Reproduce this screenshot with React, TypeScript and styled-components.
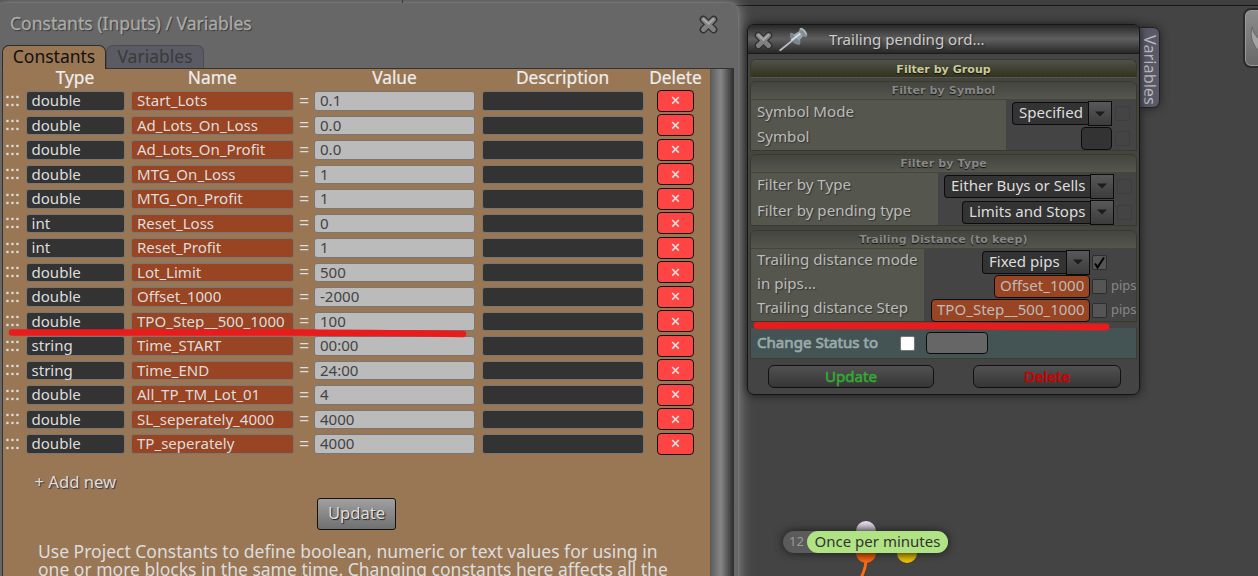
import React from 'react';
import styled, { createGlobalStyle, css } from 'styled-components';

const Global = createGlobalStyle`
  *, *::before, *::after { box-sizing: border-box; }
  body { margin: 0; background: #444; font-family: "Noto Sans", sans-serif; }
`;

const Desktop = styled.div`
  position: relative;
  width: 1258px;
  height: 576px;
  overflow: hidden;
  background: #444;
`;

const TopBar = styled.div`
  height: 6px;
  background: #3f3f3f;
  border-bottom: 1px solid #161616;
`;

/* ---------- constants dialog ---------- */

const Dialog = styled.section`
  position: absolute;
  left: -4px;
  top: 3px;
  width: 742px;
  height: 620px;
  display: flex;
  flex-direction: column;
  padding: 0 4px 0 6px;
  background: #676767;
  border-radius: 9px;
  box-shadow: 0 0 2px #8d8d8d, 0 0 13px 2px #8a8a8a;
`;

const DialogHead = styled.header`
  display: flex;
  justify-content: space-between;
  height: 42px;
  padding: 0 15px 0 8px;
`;

const DialogTitle = styled.h1`
  margin: 0;
  font-size: 17.55px;
  font-weight: 400;
  line-height: 41px;
  color: #aaa;
  -webkit-text-stroke: 0.3px #aaa;
  text-shadow: 1px 1px 1px #333;
`;

const CloseBox = styled.span<{ $top: number }>`
  display: block;
  height: 20px;
  margin-top: ${p => p.$top}px;
`;

const TabStrip = styled.nav`
  display: flex;
  height: 23px;
`;

const Tab = styled.div<{ $active?: boolean; $width: number }>`
  width: ${p => p.$width}px;
  height: 23px;
  border: 1px solid #4c4c50;
  border-bottom: 0;
  border-radius: 7px 7px 0 0;
  background: #5b5b65;
  color: #3a3a3a;
  font-size: 17.5px;
  line-height: 21px;
  text-align: center;
  white-space: nowrap;
  ${p => p.$active && css`
    position: relative;
    height: 24px;
    border-color: #2c2c2c;
    background: #997755;
    color: #111;
  `}
`;

const TabBody = styled.div`
  flex: 1;
  display: flex;
  width: 732px;
  border: 1px solid #333;
  background: #997755;
`;

const TabContent = styled.div`
  width: 707px;
  flex: none;
`;

const Scroll = styled.div`
  flex: 1;
  background: linear-gradient(90deg, #5a5a5a, #858585 45%, #7a7a7a 55%, #303030);
`;

const Columns = styled.div`
  display: grid;
  grid-template-columns: 14px 99px 162.5px 7.5px 161px 162px 44px;
  column-gap: 6.5px;
  padding-left: 2px;
`;

const HeadRow = styled(Columns)`
  height: 19.5px;
  font-size: 17.33px;
  line-height: 17px;
  text-align: center;
  color: #eee;
  white-space: nowrap;
  -webkit-text-stroke: 0.2px #eee;
`;

const DeleteHead = styled.span`
  margin: 0 -9px 0 -2px;
`;

const Row = styled(Columns)`
  align-items: center;
  height: 24.5px;
`;

const fieldColors = {
  dark: ['#333', '#ddd'],
  rust: ['#994422', '#ddd'],
  light: ['#bbb', '#444'],
};

const Field = styled.div<{ $tone: keyof typeof fieldColors }>`
  height: 19.5px;
  padding-left: 5px;
  border: 1px solid #777;
  border-radius: 3px;
  background: ${p => fieldColors[p.$tone][0]};
  color: ${p => fieldColors[p.$tone][1]};
  font-size: 15.05px;
  line-height: 17px;
  white-space: nowrap;
`;

const Equals = styled.span`
  color: #ddd;
  font-size: 18px;
  line-height: 18px;
  margin: -2px 0 0 -1px;
`;

const DeleteButton = styled.button`
  display: grid;
  place-items: center;
  justify-self: end;
  width: 37px;
  height: 22px;
  padding: 0;
  border: 1px solid #111;
  border-radius: 4px;
  background: #ff4444;
`;

const AddNew = styled.div`
  margin: 15.5px 0 0 31.5px;
  color: #ddd;
  font-size: 16.65px;
  line-height: 20px;
  text-shadow: 1px 1px 1px #333;
`;

const UpdateButton = styled.button`
  display: block;
  width: 79px;
  height: 32px;
  margin: 6px 0 0 314px;
  padding: 0 0 2px;
  border: 1px solid #111;
  border-radius: 3px;
  background: linear-gradient(#a0a0a0, #707070);
  color: #ddd;
  font: 16.6px "Noto Sans", sans-serif;
  text-shadow: 1px 1px 1px #222;
`;

const Help = styled.p`
  margin: 12px 0 0 35px;
  color: #ddd;
  font-size: 17.5px;
  line-height: 18px;
  white-space: nowrap;
`;

/* ---------- block settings panel ---------- */

const Panel = styled.section`
  position: absolute;
  left: 747px;
  top: 24px;
  width: 393px;
  height: 371px;
  display: flex;
  flex-direction: column;
  border: 1px solid #161616;
  border-radius: 7px;
  background: #444;
  box-shadow: 0 0 10px #1c1c1c;
`;

const PanelHead = styled.header`
  display: flex;
  height: 29px;
  flex: none;
  padding-left: 6px;
  border-bottom: 1px solid #1b1b1b;
  border-radius: 6px 6px 0 0;
  background: linear-gradient(#282828, #5f5f5f 50%, #282828);
`;

const PanelTitle = styled.h2`
  margin: 0 0 0 19px;
  color: #ccc;
  font-size: 15.1px;
  font-weight: 400;
  line-height: 28px;
  text-shadow: 1px 1px 2px #222;
`;

const PinBox = styled.span`
  display: block;
  width: 31px;
  height: 28px;
  margin-left: 5px;
`;

const SideTab = styled.aside`
  position: absolute;
  left: 1139px;
  top: 27px;
  width: 21px;
  height: 81px;
  display: grid;
  place-items: center;
  padding-top: 4px;
  border: 1px solid #222;
  border-radius: 0 7px 7px 0;
  background: #595969;
  box-shadow: 0 0 8px #222;
  color: #bbb;
  font-size: 16.3px;
  line-height: 19px;
  writing-mode: vertical-rl;
`;

const GroupHead = styled.div`
  flex: none;
  height: 19px;
  margin: 5px 2px 0;
  border: 1px solid #3a3b26;
  border-bottom: 1px dashed #5a5b3a;
  border-radius: 6px 6px 0 0;
  background: linear-gradient(#50514a, #32331f);
  color: #cccc99;
  font: bold 11px/19px "DejaVu Sans", sans-serif;
  letter-spacing: 0.05px;
  text-align: center;
  text-shadow: 0 1px 1px #111;
`;

const Group = styled.section<{ $top: number }>`
  flex: none;
  margin: ${p => p.$top}px 2px 0;
  border: 1px solid #3a3b26;
  border-radius: 6px 6px 0 0;
`;

const GroupTitle = styled.h3`
  height: 18px;
  margin: 0;
  border-bottom: 1px solid #45463a;
  border-radius: 5px 5px 0 0;
  background: linear-gradient(#44453f, #55564e);
  color: #888;
  font: bold 11px/18px "DejaVu Sans", sans-serif;
  letter-spacing: 0.15px;
  text-align: center;
  text-shadow: 0 1px 1px #111;
`;

const GroupBody = styled.div<{ $labels: number }>`
  display: grid;
  grid-template-columns: ${p => p.$labels}px 1fr;
`;

const Labels = styled.div<{ $row: number }>`
  display: grid;
  grid-auto-rows: ${p => p.$row}px;
  align-items: center;
  padding-left: 6px;
  background: #55564e;
  color: #bbb;
  font-size: 15.1px;
  line-height: 20px;
  text-shadow: 1px 1px 1px #333;
  white-space: nowrap;

  span { padding-bottom: 4px; }
`;

const Controls = styled.div<{ $row: number; $drop?: number }>`
  display: grid;
  grid-auto-rows: ${p => p.$row}px;
  align-content: start;
  margin: ${p => p.$drop ?? 0}px 0 -${p => p.$drop ?? 0}px;
`;

const ControlRow = styled.div<{ $end: number }>`
  display: flex;
  align-items: center;
  justify-content: flex-end;
  padding-right: ${p => p.$end}px;
`;

const SelectText = styled.div<{ $width: number }>`
  width: ${p => p.$width}px;
  height: 23px;
  border: 1px solid #0c0c0c;
  border-right: 0;
  border-radius: 4px 0 0 4px;
  background: #333;
  color: #ddd;
  font-size: 15.05px;
  line-height: 19px;
  padding-left: 6px;
  white-space: nowrap;
`;

const SelectArrow = styled.div`
  display: grid;
  place-items: center;
  width: 24px;
  height: 25px;
  border: 1px solid #0c0c0c;
  background: linear-gradient(#585858, #3c3c3c);
`;

const Check = styled.span<{ $faint?: boolean; $gap: number }>`
  display: grid;
  place-items: center;
  width: 15px;
  height: 15px;
  margin-left: ${p => p.$gap}px;
  border: 1px solid ${p => (p.$faint ? '#3d3d3d' : '#2d2d2d')};
  border-radius: 2px;
  background: ${p => (p.$faint ? 'transparent' : '#555')};
`;

const Token = styled.div<{ $width: number; $blank?: boolean }>`
  width: ${p => p.$width}px;
  height: 23px;
  padding-left: 5px;
  border: 1px solid #0c0c0c;
  border-radius: 4px;
  background: ${p => (p.$blank ? '#333' : '#994422')};
  color: #bbb;
  font-size: 15.05px;
  line-height: 18px;
  white-space: nowrap;
`;

const Unit = styled.span`
  width: 25px;
  margin: -2px 0 0 4px;
  color: #888;
  font-size: 13px;
  line-height: 18px;
`;

const Status = styled.div`
  flex: none;
  display: flex;
  align-items: center;
  height: 31px;
  margin: 6px 2px 0;
  padding-left: 6px;
  border: 1px solid #3a4030;
  border-top: 0;
  background: #445454;
`;

const StatusLabel = styled.span`
  width: 143px;
  padding-bottom: 2px;
  color: #99aaaa;
  font-size: 15.1px;
  -webkit-text-stroke: 0.7px #99aaaa;
  line-height: 20px;
`;

const StatusCheck = styled.span`
  width: 15px;
  height: 15px;
  border: 1px solid #777;
  border-radius: 2px;
  background: #fff;
`;

const StatusField = styled.span`
  width: 62px;
  height: 22px;
  margin-left: 11px;
  border: 1px solid #0c0c0c;
  border-radius: 4px;
  background: #666;
`;

const Actions = styled.footer`
  display: flex;
  gap: 39px;
  padding: 6px 0 0 20px;
`;

const Action = styled.button<{ $width: number; $color: string }>`
  width: ${p => p.$width}px;
  height: 23px;
  padding: 0 0 1px;
  border: 1px solid #111;
  border-radius: 6px;
  background: linear-gradient(#515151, #363636);
  color: ${p => p.$color};
  -webkit-text-stroke: 0.6px ${p => p.$color};
  font: 15.1px/19px "Noto Sans", sans-serif;
`;

/* ---------- canvas items ---------- */

const Wires = styled.svg`
  position: absolute;
  left: 840px;
  top: 515px;
`;

const Node = styled.div`
  position: absolute;
  left: 783px;
  top: 531px;
  width: 165px;
  height: 22px;
  display: flex;
  border-radius: 11px;
  background: #5b5b5b;
  box-shadow: 0 0 10px #1a1a1a;
`;

const NodeIndex = styled.span`
  width: 24px;
  padding-left: 6px;
  color: #999;
  font-size: 13px;
  line-height: 21px;
`;

const NodeName = styled.span`
  flex: 1;
  border-radius: 11px;
  background: #b0e383;
  color: #333;
  font-size: 15px;
  line-height: 21px;
  text-align: center;
  white-space: nowrap;
`;

const EdgeButton = styled.div`
  position: absolute;
  left: 1243px;
  top: 8px;
  width: 40px;
  height: 60px;
  border: 2px solid #2b2b2b;
  border-radius: 8px;
  background: linear-gradient(#8c8c8c, #686868);
  box-shadow: inset 0 0 0 1px #999;
`;

const Marker = styled.svg`
  position: absolute;
  left: 0;
  top: 0;
`;

const CrossIcon = () => (
  <svg width="20" height="20" viewBox="0 0 20 20">
    <path d="M4.300 4.300L14.700 14.700M14.700 4.300L4.300 14.700" stroke="#303030" strokeWidth="7.400" strokeLinecap="round" />
    <path d="M4.500 4.500L14.500 14.500M14.500 4.500L4.500 14.500" stroke="#808080" strokeWidth="4.900" strokeLinecap="round" />
    <path d="M4.300 4L9.500 8.800L14.500 4" stroke="#a6a6a6" strokeWidth="2" strokeLinecap="round" fill="none" />
  </svg>
);

const PinIcon = () => (
  <svg width="31" height="28" viewBox="0 0 31 28">
    <path d="M1.200 25.200L14 15" stroke="#b6bcc0" strokeWidth="1.800" strokeLinecap="round" />
    <path d="M11 8Q13.500 7 15.500 9.500L20.500 14Q22.500 17 20.500 20Q15.500 19.500 12.500 16Q10 12 11 8Z" fill="#7c868d" />
    <path d="M14 10L21 5.500L25.500 9.500L20 16Z" fill="#98a2a9" />
    <path d="M13 15L22 8" stroke="#d5dadd" strokeWidth="2.200" strokeLinecap="round" />
    <ellipse cx="24.300" cy="7.500" rx="3" ry="5.400" transform="rotate(-38 24.300 7.500)" fill="#858f96" />
    <path d="M21 4Q24.500 3.500 27.500 9.500" stroke="#bcc3c7" strokeWidth="1.200" fill="none" />
  </svg>
);

const Cross = () => (
  <svg width="9" height="9" viewBox="0 0 9 9">
    <path d="M1.200 1L7.800 7.600M7.800 1L1.200 7.600" stroke="#ddd" strokeWidth="1.700" />
  </svg>
);

const Grip = () => (
  <svg width="14" height="12" viewBox="0 0 14 12">
    {[1.3, 6.3, 11.3].map(x => [0.8, 8.8].map(y => (
      <rect key={`${x}-${y}`} x={x} y={y} width="2.300" height="2.300" fill="#ddd" />
    )))}
  </svg>
);

const Select = ({ text, width }: { text: string; width: number }) => (
  <>
    <SelectText $width={width}>{text}</SelectText>
    <SelectArrow>
      <svg width="10" height="6" viewBox="0 0 10 6"><path d="M0 0.500H10L5 5.500Z" fill="#1c1c1c" /></svg>
    </SelectArrow>
  </>
);

const rows: [string, string, string][] = [
  ['double', 'Start_Lots', '0.1'],
  ['double', 'Ad_Lots_On_Loss', '0.0'],
  ['double', 'Ad_Lots_On_Profit', '0.0'],
  ['double', 'MTG_On_Loss', '1'],
  ['double', 'MTG_On_Profit', '1'],
  ['int', 'Reset_Loss', '0'],
  ['int', 'Reset_Profit', '1'],
  ['double', 'Lot_Limit', '500'],
  ['double', 'Offset_1000', '-2000'],
  ['double', 'TPO_Step__500_1000', '100'],
  ['string', 'Time_START', '00:00'],
  ['string', 'Time_END', '24:00'],
  ['double', 'All_TP_TM_Lot_01', '4'],
  ['double', 'SL_seperately_4000', '4000'],
  ['double', 'TP_seperately', '4000'],
];

export default function App() {
  return (
    <>
      <Global />
      <Desktop>
        <TopBar />
        <EdgeButton>
          <svg width="20" height="54" viewBox="0 0 20 54">
            <path d="M7 17Q3 32 16 43L24 43V36Q10 30 7 17Z" fill="#a2a2a2" stroke="#666" />
          </svg>
        </EdgeButton>

        <Dialog>
          <DialogHead>
            <DialogTitle>Constants (Inputs) / Variables</DialogTitle>
            <CloseBox $top={12}><CrossIcon /></CloseBox>
          </DialogHead>
          <TabStrip>
            <Tab $active $width={104}>Constants</Tab>
            <Tab $width={98}>Variables</Tab>
          </TabStrip>
          <TabBody>
            <TabContent>
              <HeadRow>
                <span /><span>Type</span><span>Name</span><span /><span>Value</span><span>Description</span>
                <DeleteHead>Delete</DeleteHead>
              </HeadRow>
              {rows.map(([type, name, value]) => (
                <Row key={name}>
                  <Grip />
                  <Field $tone="dark">{type}</Field>
                  <Field $tone="rust">{name}</Field>
                  <Equals>=</Equals>
                  <Field $tone="light">{value}</Field>
                  <Field $tone="dark" />
                  <DeleteButton><Cross /></DeleteButton>
                </Row>
              ))}
              <AddNew>+ Add new</AddNew>
              <UpdateButton>Update</UpdateButton>
              <Help>
                Use Project Constants to define boolean, numeric or text values for using in<br />
                one or more blocks in the same time. Changing constants here affects all the
              </Help>
            </TabContent>
            <Scroll />
          </TabBody>
        </Dialog>

        <SideTab>Variables</SideTab>
        <Panel>
          <PanelHead>
            <CloseBox $top={6}><CrossIcon /></CloseBox>
            <PinBox><PinIcon /></PinBox>
            <PanelTitle>Trailing pending ord...</PanelTitle>
          </PanelHead>
          <GroupHead>Filter by Group</GroupHead>
          <Group $top={3}>
            <GroupTitle>Filter by Symbol</GroupTitle>
            <GroupBody $labels={255}>
              <Labels $row={25}><span>Symbol Mode</span><span>Symbol</span></Labels>
              <Controls $row={25} $drop={1}>
                <ControlRow $end={6}><Select text="Specified" width={76} /><Check $faint $gap={3} /></ControlRow>
                <ControlRow $end={6}><Token $blank $width={31} /><Check $faint $gap={3} /></ControlRow>
              </Controls>
            </GroupBody>
          </Group>
          <Group $top={3}>
            <GroupTitle>Filter by Type</GroupTitle>
            <GroupBody $labels={187}>
              <Labels $row={26}><span>Filter by Type</span><span>Filter by pending type</span></Labels>
              <Controls $row={26}>
                <ControlRow $end={4}><Select text="Either Buys or Sells" width={146} /><Check $faint $gap={3} /></ControlRow>
                <ControlRow $end={4}><Select text="Limits and Stops" width={128} /><Check $faint $gap={3} /></ControlRow>
              </Controls>
            </GroupBody>
          </Group>
          <Group $top={4}>
            <GroupTitle>Trailing Distance (to keep)</GroupTitle>
            <GroupBody $labels={173}>
              <Labels $row={24}><span>Trailing distance mode</span><span>in pips...</span><span>Trailing distance Step</span></Labels>
              <Controls $row={24} $drop={1}>
                <ControlRow $end={29}>
                  <Select text="Fixed pips" width={84} />
                  <Check $gap={2}>
                    <svg width="13" height="13" viewBox="0 0 13 13"><path d="M2 7.500L4.500 11.500L11 1.500" stroke="#000" strokeWidth="2" fill="none" /></svg>
                  </Check>
                </ControlRow>
                <ControlRow $end={0}><Token $width={96}>Offset_1000</Token><Check $gap={2} /><Unit>pips</Unit></ControlRow>
                <ControlRow $end={0}><Token $width={159}>TPO_Step__500_1000</Token><Check $gap={2} /><Unit>pips</Unit></ControlRow>
              </Controls>
            </GroupBody>
          </Group>
          <Status>
            <StatusLabel>Change Status to</StatusLabel>
            <StatusCheck />
            <StatusField />
          </Status>
          <Actions>
            <Action $width={166} $color="#33aa33">Update</Action>
            <Action $width={148} $color="#cc0000">Delete</Action>
          </Actions>
        </Panel>

        <Wires width="90" height="61" viewBox="0 0 90 61">
          <defs>
            <linearGradient id="pale" x2="0" y2="1"><stop stopColor="#efe0f2" /><stop offset=".6" stopColor="#b5aab8" /></linearGradient>
            <linearGradient id="orange" x2="0" y2="1"><stop offset=".4" stopColor="#c84a00" /><stop offset="1" stopColor="#ff6a10" /></linearGradient>
            <linearGradient id="yellow" x2="0" y2="1"><stop offset=".4" stopColor="#b89a00" /><stop offset="1" stopColor="#f5c800" /></linearGradient>
          </defs>
          <circle cx="26" cy="16" r="10" fill="url(#pale)" />
          <circle cx="26" cy="38" r="10" fill="url(#orange)" />
          <circle cx="67" cy="38" r="10" fill="url(#yellow)" />
          <path d="M26 46Q25.500 54 21 63" stroke="#ff6a10" strokeWidth="3" fill="none" />
        </Wires>
        <Node>
          <NodeIndex>12</NodeIndex>
          <NodeName>Once per minutes</NodeName>
        </Node>

        <Marker width="1258" height="576" viewBox="0 0 1258 576" pointerEvents="none">
          <path d="M402.500 0V3" stroke="#3a3a3a" strokeWidth="1" />
          <path d="M12 332.500L300 332.500Q400 333 463 334" stroke="#e81c1c" strokeWidth="6.500" strokeLinecap="round" fill="none" />
          <path d="M757 325.500L960 326L1106 327" stroke="#e81c1c" strokeWidth="7" strokeLinecap="round" fill="none" />
        </Marker>
      </Desktop>
    </>
  );
}
